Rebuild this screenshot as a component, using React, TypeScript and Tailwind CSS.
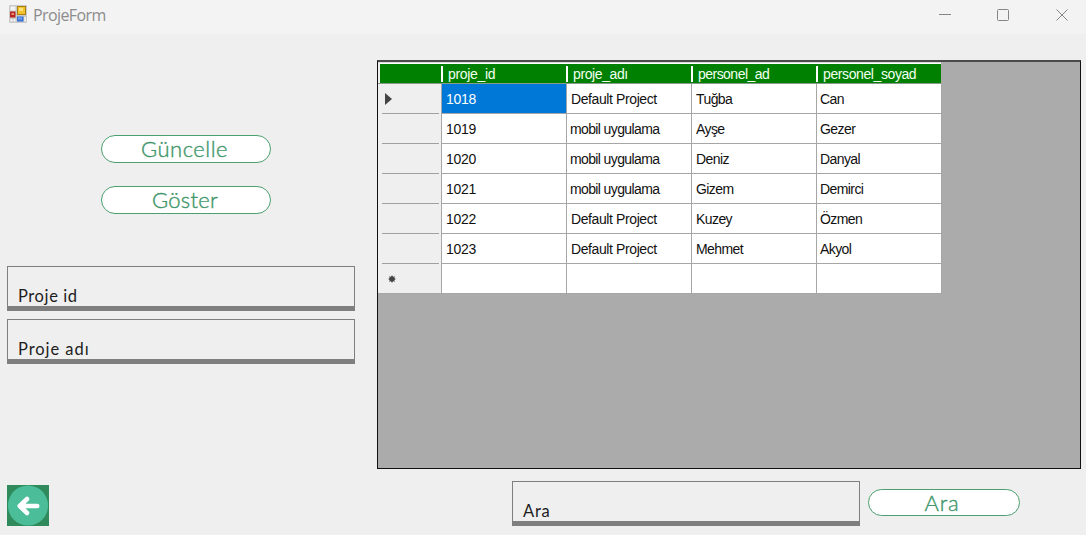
import React from "react";

const columns = [
  { name: "proje_id", text: "tracking-[-0.32px]" },
  { name: "proje_adı", text: "tracking-[-0.4px]" },
  { name: "personel_ad", text: "tracking-[-0.53px]" },
  { name: "personel_soyad", text: "tracking-[-0.4px]" },
];

const rows = [
  ["1018", "Default Project", "Tuğba", "Can"],
  ["1019", "mobil uygulama", "Ayşe", "Gezer"],
  ["1020", "mobil uygulama", "Deniz", "Danyal"],
  ["1021", "mobil uygulama", "Gizem", "Demirci"],
  ["1022", "Default Project", "Kuzey", "Özmen"],
  ["1023", "Default Project", "Mehmet", "Akyol"],
  ["", "", "", ""],
];

function FormIcon() {
  return (
    <svg width="18" height="18" viewBox="0 0 18 18">
      <rect width="18" height="18" rx="1" fill="#c9c9c9" />
      <rect x="1.5" y="1.5" width="5" height="4" fill="#f3f3f3" />
      <rect x="1" y="6.5" width="5.5" height="6" fill="#b92720" />
      <rect x="2.5" y="8" width="2.5" height="2" fill="#e58a7d" />
      <rect x="8" y="1" width="9" height="9" fill="#a97f10" />
      <rect x="9" y="2" width="7" height="7" fill="#f4c22c" />
      <rect x="10" y="3" width="4" height="3" fill="#ffe17a" />
      <rect x="8" y="11.5" width="6.5" height="5" fill="#3973d7" />
      <rect x="9" y="12.5" width="4" height="2" fill="#75a6f4" />
      <rect x="1.5" y="14" width="2" height="2.5" fill="#f3f3f3" />
      <rect x="4.5" y="14" width="2" height="2.5" fill="#f3f3f3" />
      <rect x="15.2" y="12" width="1.8" height="4.5" fill="#eee" />
    </svg>
  );
}

function TitleBar() {
  return (
    <header className="flex h-[34px] shrink-0 items-start bg-[#f3f3f3] pl-[9px]">
      <div className="mt-[5px]"><FormIcon /></div>
      <h1 className="ml-[6px] mt-[5px] font-['Open_Sans',sans-serif] text-[16px] leading-[21px] tracking-[-0.6px] text-[#8c8c8c]">ProjeForm</h1>
      <svg className="ml-auto mr-[17px] mt-[8px]" width="130" height="14" fill="none" stroke="#858585">
        <path d="M0 6.5h12" />
        <rect x="58.5" y="1.5" width="11" height="11" rx="1" />
        <path d="m117.500 1.500 11 11m0-11-11 11" />
      </svg>
    </header>
  );
}

function PillButton({ children, className }: { children: React.ReactNode; className: string }) {
  return (
    <button className={`flex items-center justify-center rounded-full border-[1.5px] border-[#4b9f70] bg-white font-['Lato',sans-serif] font-light leading-none text-[#3f966a] [-webkit-text-stroke:0.4px_#3f966a] ${className}`}>
      {children}
    </button>
  );
}

function Field({ label, className = "" }: { label: string; className?: string }) {
  return (
    <label className={`flex h-[45px] w-[348px] shrink-0 items-end border border-b-[5px] border-[#7f7f7f] pl-[10px] font-['Lato',sans-serif] text-[16.500px] leading-[20px] text-[#1d1d1d] ${className}`}>
      {label}
    </label>
  );
}

function RowMarker({ index }: { index: number }) {
  if (index === 0) return <svg width="7" height="12"><path d="M0 0v12l7-6z" fill="#444" /></svg>;
  if (index === 6)
    return (
      <svg className="ml-[3px] mt-px" width="8" height="8" stroke="#444" strokeWidth="1.6">
        <circle cx="4" cy="4" r="2" fill="#444" />
        <path d="M4 .5v7M.5 4h7M1.500 1.500l5 5m0-5-5 5" strokeWidth="1" />
      </svg>
    );
  return null;
}

function cellTracking(value: string, column: number) {
  if (column === 0) return "tracking-[-0.25px]";
  if (value.startsWith("mobil")) return "tracking-[-0.62px] -ml-[1px]";
  if (column === 1) return "tracking-[-0.4px]";
  if (column === 3) return "tracking-[-0.58px] -ml-[1px]";
  return "tracking-[-0.58px]";
}

function DataGrid() {
  return (
    <section className="h-[409px] w-[704px] border border-t-2 border-[#111] border-t-[#4a4a4a] bg-[#ababab]">
      <div className="w-[564px] font-['Liberation_Sans',sans-serif] text-[14px]">
        <div className="flex h-[22px] w-[563px] border-b border-b-[#8b9b8b] border-t border-t-[#ddd] bg-[#008000]">
          <div className="w-[2px] shrink-0 bg-[#efefef]" />
          <div className="w-[61px] shrink-0 border-t border-white" />
          {columns.map((c) => (
            <div key={c.name} className="flex w-[125px] shrink-0 items-center border-t border-white pt-px">
              <span className="mr-[5px] h-[16px] w-[2px] bg-white" />
              <span className={`whitespace-nowrap leading-[18px] text-[#f2fff2] ${c.text}`}>{c.name}</span>
            </div>
          ))}
        </div>
        {rows.map((row, r) => (
          <div key={r} className="flex h-[30px] bg-[#efefef]">
            <div className={`flex w-[64px] border-r border-[#a6a6a6] pl-[4px] pr-[2px] ${r === 6 ? "border-b" : ""}`}>
              <div className={`flex flex-1 items-center border-b pl-[3px] ${r === 6 ? "border-transparent" : "border-[#a0a0a0]"}`}>
                <RowMarker index={r} />
              </div>
            </div>
            {row.map((cell, c) => (
              <div key={c} className={`flex w-[125px] items-center whitespace-nowrap border-b border-r border-[#a6a6a6] pl-[4px] leading-[18px] ${r === 0 && c === 0 ? "bg-[#0078d7] text-white" : "bg-white text-[#111]"}`}>
                <span className={cellTracking(cell, c)}>{cell}</span>
              </div>
            ))}
          </div>
        ))}
      </div>
    </section>
  );
}

function BackButton() {
  return (
    <button aria-label="Back" className="mb-[9px]">
      <svg width="42" height="41" viewBox="0 0 43 41" preserveAspectRatio="none">
        <path fill="#2f8b5b" d="M0 0h43v41H0z" />
        <ellipse cx="21.500" cy="20.500" rx="20.500" ry="20" fill="#4bbd98" />
        <path d="M31 21H13m7.500-7-7.500 7 7.500 7" fill="none" stroke="#fff" strokeWidth="4.600" strokeLinecap="round" strokeLinejoin="round" />
      </svg>
    </button>
  );
}

export default function App() {
  return (
    <div className="flex h-[535px] w-[1086px] flex-col overflow-hidden bg-[#efefef]">
      <TitleBar />
      <main className="flex min-h-0 flex-1 pl-[7px]">
        <aside className="flex w-[370px] flex-col items-start">
          <PillButton className="ml-[94px] mt-[101px] h-[28px] w-[170px] pr-[3px] text-[22px] tracking-[0.5px]">Güncelle</PillButton>
          <PillButton className="ml-[94px] mt-[23px] h-[28px] w-[170px] pr-[2px] text-[22px] tracking-[0.3px]">Göster</PillButton>
          <Field label="Proje id" className="mt-[52px] tracking-[0.6px]" />
          <Field label="Proje adı" className="mt-[8px] tracking-[0.95px]" />
          <div className="mt-auto flex"><BackButton /></div>
        </aside>
        <div className="pt-[26px]">
          <DataGrid />
          <div className="flex pl-[135px] pt-[12px]">
            <Field label="Ara" className="tracking-[0.8px]" />
            <PillButton className="ml-[8px] mt-[8px] h-[27px] w-[152px] pr-[4px] text-[22px] tracking-[0.8px]">Ara</PillButton>
          </div>
        </div>
      </main>
    </div>
  );
}
